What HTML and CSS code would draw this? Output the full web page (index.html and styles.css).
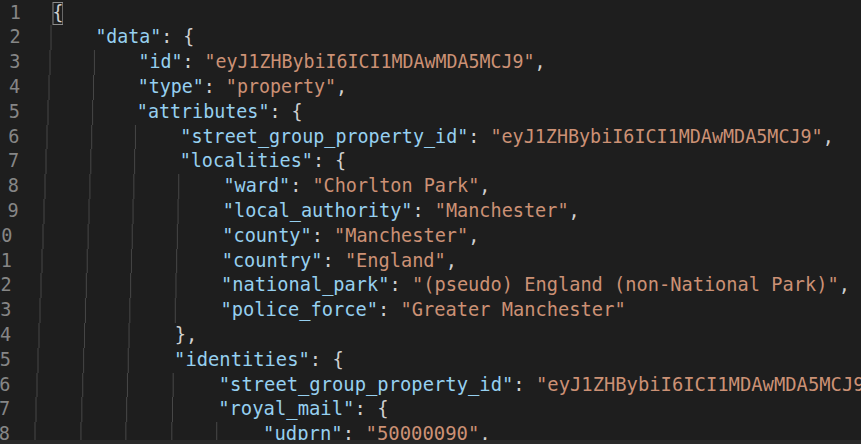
FILE: index.html
```html
<!DOCTYPE html>
<html lang="en">
<head>
<meta charset="utf-8">
<title>property.json</title>
<link rel="stylesheet" href="styles.css">
</head>
<body>
<div class="window">
  <div class="editor">
    <div class="line"><span class="ln">1</span><span class="code"><span class="match">{</span></span></div>
    <div class="line"><span class="ln">2</span><span class="code"><span class="ind"></span><span class="k">"data"</span>: {</span></div>
    <div class="line"><span class="ln">3</span><span class="code"><span class="ind"></span><span class="ind"></span><span class="k">"id"</span>: <span class="s">"eyJ1ZHBybiI6ICI1MDAwMDA5MCJ9"</span>,</span></div>
    <div class="line"><span class="ln">4</span><span class="code"><span class="ind"></span><span class="ind"></span><span class="k">"type"</span>: <span class="s">"property"</span>,</span></div>
    <div class="line"><span class="ln">5</span><span class="code"><span class="ind"></span><span class="ind"></span><span class="k">"attributes"</span>: {</span></div>
    <div class="line"><span class="ln">6</span><span class="code"><span class="ind"></span><span class="ind"></span><span class="ind"></span><span class="k">"street_group_property_id"</span>: <span class="s">"eyJ1ZHBybiI6ICI1MDAwMDA5MCJ9"</span>,</span></div>
    <div class="line"><span class="ln">7</span><span class="code"><span class="ind"></span><span class="ind"></span><span class="ind"></span><span class="k">"localities"</span>: {</span></div>
    <div class="line"><span class="ln">8</span><span class="code"><span class="ind"></span><span class="ind"></span><span class="ind"></span><span class="ind"></span><span class="k">"ward"</span>: <span class="s">"Chorlton Park"</span>,</span></div>
    <div class="line"><span class="ln">9</span><span class="code"><span class="ind"></span><span class="ind"></span><span class="ind"></span><span class="ind"></span><span class="k">"local_authority"</span>: <span class="s">"Manchester"</span>,</span></div>
    <div class="line"><span class="ln two">10</span><span class="code"><span class="ind"></span><span class="ind"></span><span class="ind"></span><span class="ind"></span><span class="k">"county"</span>: <span class="s">"Manchester"</span>,</span></div>
    <div class="line"><span class="ln two">11</span><span class="code"><span class="ind"></span><span class="ind"></span><span class="ind"></span><span class="ind"></span><span class="k">"country"</span>: <span class="s">"England"</span>,</span></div>
    <div class="line"><span class="ln two">12</span><span class="code"><span class="ind"></span><span class="ind"></span><span class="ind"></span><span class="ind"></span><span class="k">"national_park"</span>: <span class="s">"(pseudo) England (non-National Park)"</span>,</span></div>
    <div class="line"><span class="ln two">13</span><span class="code"><span class="ind"></span><span class="ind"></span><span class="ind"></span><span class="ind"></span><span class="k">"police_force"</span>: <span class="s">"Greater Manchester"</span></span></div>
    <div class="line"><span class="ln two">14</span><span class="code"><span class="ind"></span><span class="ind"></span><span class="ind"></span>},</span></div>
    <div class="line"><span class="ln two">15</span><span class="code"><span class="ind"></span><span class="ind"></span><span class="ind"></span><span class="k">"identities"</span>: {</span></div>
    <div class="line"><span class="ln two">16</span><span class="code"><span class="ind"></span><span class="ind"></span><span class="ind"></span><span class="ind"></span><span class="k">"street_group_property_id"</span>: <span class="s">"eyJ1ZHBybiI6ICI1MDAwMDA5MCJ9"</span>,</span></div>
    <div class="line"><span class="ln two">17</span><span class="code"><span class="ind"></span><span class="ind"></span><span class="ind"></span><span class="ind"></span><span class="k">"royal_mail"</span>: {</span></div>
    <div class="line"><span class="ln two">18</span><span class="code"><span class="ind"></span><span class="ind"></span><span class="ind"></span><span class="ind"></span><span class="ind"></span><span class="k">"udprn"</span>: <span class="s">"50000090"</span>,</span></div>
  </div>
  <div class="hscroll"></div>
</div>
</body>
</html>
```

FILE: styles.css
```css
html, body {
  margin: 0;
  padding: 0;
  background: #1e1e1e;
  overflow: hidden;
}

.window {
  width: 861px;
  height: 444px;
  display: flex;
  flex-direction: column;
  overflow: hidden;
  background: #1e1e1e;
}

.editor {
  flex: 1;
  min-height: 0;
  padding-top: 0.6px;
  overflow: hidden;
  font-family: "DejaVu Sans Mono", "Liberation Mono", monospace;
  font-size: 18.52px;
  color: #d0d0d0;
}

/* the photographed screen is slightly keystoned: each row drifts and widens a little */
.line:nth-child(1)  { --i: 0; }
.line:nth-child(2)  { --i: 1; }
.line:nth-child(3)  { --i: 2; }
.line:nth-child(4)  { --i: 3; }
.line:nth-child(5)  { --i: 4; }
.line:nth-child(6)  { --i: 5; }
.line:nth-child(7)  { --i: 6; }
.line:nth-child(8)  { --i: 7; }
.line:nth-child(9)  { --i: 8; }
.line:nth-child(10) { --i: 9; }
.line:nth-child(11) { --i: 10; }
.line:nth-child(12) { --i: 11; }
.line:nth-child(13) { --i: 12; }
.line:nth-child(14) { --i: 13; }
.line:nth-child(15) { --i: 14; }
.line:nth-child(16) { --i: 15; }
.line:nth-child(17) { --i: 16; }
.line:nth-child(18) { --i: 17; }

.line {
  display: flex;
  height: 24.8px;
  line-height: 24.8px;
  white-space: pre;
  transform: translateX(calc(var(--i) * -0.3px));
}

.ln {
  flex: 0 0 21px;
  min-width: 0;
  margin-right: 25.5px;
  text-align: right;
  color: #868686;
  overflow: visible;
}

.ln.two {
  direction: rtl;
  padding-right: 6px;
  box-sizing: border-box;
}

.code {
  display: flex;
  align-items: stretch;
  transform-origin: 305.5px 50%;
  transform: scaleX(calc(0.982 + var(--i) * 0.00229));
}

.ind {
  display: inline-block;
  width: 4ch;
  height: 24.8px;
  border-left: 1px solid #474747;
  box-sizing: border-box;
  margin-left: -1px;
  margin-right: 1px;
}

.k {
  color: #96d0f0;
}

.s {
  color: #cc9175;
}

.match {
  display: inline-block;
  height: 23px;
  margin-top: 1px;
  line-height: 22px;
  box-shadow: inset 0 0 0 1px #8c8c8c;
}

.hscroll {
  flex: 0 0 4px;
  background: #2a2a2a;
}
```
